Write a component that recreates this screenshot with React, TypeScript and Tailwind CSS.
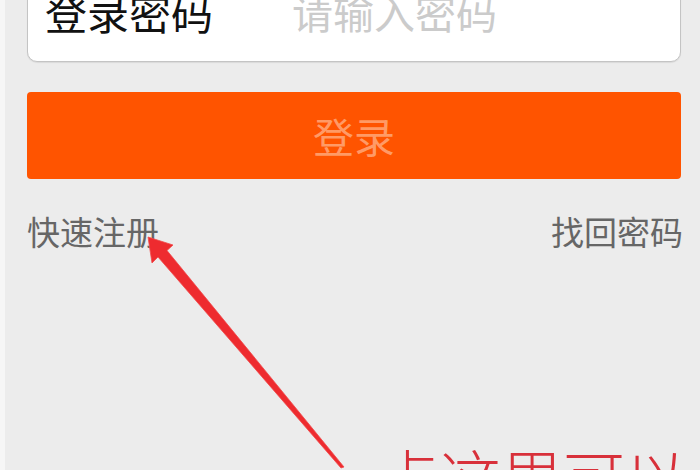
import React from "react";

export default function App() {
  const cjk = { fontFamily: '"Noto Sans CJK SC", "Noto Sans", sans-serif' };
  return (
    <div
      className="relative w-[700px] h-[470px] overflow-hidden bg-[#ececec] border-l-[5px] border-[#f6f6f6]"
      style={cjk}
    >
      <div className="flex flex-col pl-[22px] pr-[19px]">
        <div className="mt-[-40px] h-[102px] rounded-[10px] border border-[#c4c4c4] bg-white flex items-start pt-[30px] pl-[17px] shadow-[0_1px_1px_rgba(0,0,0,0.08)]">
          <span className="text-[42px] leading-none text-[#111111]">登录密码</span>
          <span className="ml-[79px] text-[41px] leading-none text-[#cbcbcb]">请输入密码</span>
        </div>
        <div className="mt-[30px] h-[87px] rounded-[4px] bg-[#ff5400] flex items-center justify-center">
          <span className="text-[41px] leading-none text-[#ff9a66]">登录</span>
        </div>
        <div className="mt-[36px] flex justify-between items-start">
          <span className="text-[33px] leading-none text-[#666666]">快速注册</span>
          <span className="text-[33px] leading-none text-[#666666] mr-[-2px]">找回密码</span>
        </div>
      </div>
      <svg
        className="absolute left-[-5px] top-0"
        width="700"
        height="470"
        viewBox="0 0 700 470"
      >
        <polygon
          points="148,237 173,245 167,250.5 344,467 341,468 158,257 152,263"
          fill="#ee2b2f"
          stroke="#f04a4a"
          strokeWidth="0.8"
          strokeLinejoin="round"
        />
      </svg>
      <div className="absolute left-[372px] top-[445px] text-[62px] leading-none text-[#d8303a] whitespace-nowrap font-light">
        点这里可以
      </div>
    </div>
  );
}
